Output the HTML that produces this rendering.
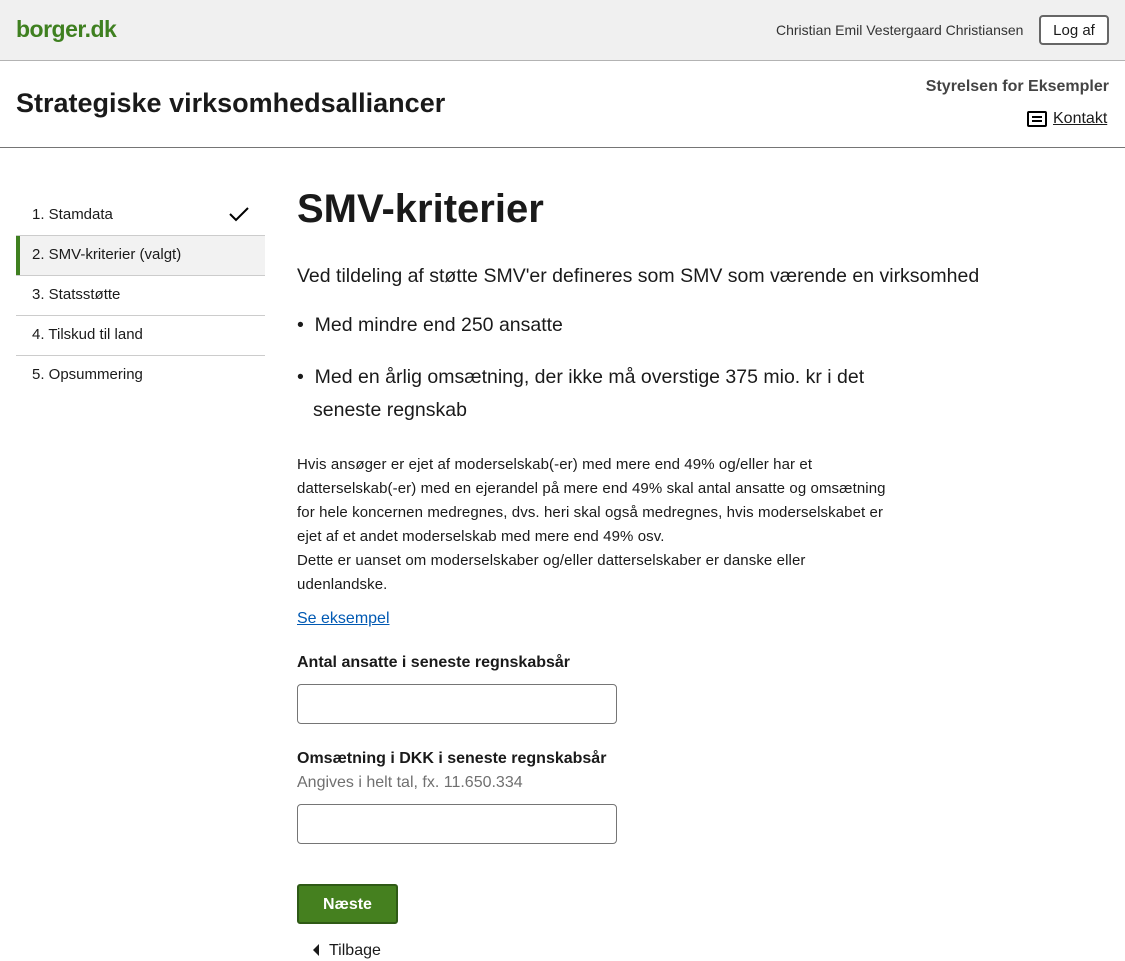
<!DOCTYPE html>
<html><head><meta charset="utf-8"><style>
*{box-sizing:border-box;margin:0;padding:0}
body{width:1125px;height:961px;overflow:hidden;background:#fff;font-family:"Liberation Sans",sans-serif;color:#1a1a1a;position:relative}
.a{position:absolute;white-space:nowrap}
</style></head><body>
<div class="a" style="left:0;top:0;width:1125px;height:61px;background:#f0f0f0;border-bottom:1px solid #b3b3b3"></div>
<div class="a" style="left:16px;top:16px;font-size:23px;font-weight:bold;color:#3f8020;letter-spacing:-0.5px">borger.dk</div>
<div class="a" style="left:776px;top:22px;font-size:14px;color:#333">Christian Emil Vestergaard Christiansen</div>
<div class="a" style="left:1039px;top:15px;width:70px;height:30px;border:2px solid #666;border-radius:4px;background:#fff;font-size:15px;text-align:center;line-height:28px">Log af</div>
<div class="a" style="left:16px;top:88px;font-size:27px;font-weight:bold;color:#1a1a1a">Strategiske virksomhedsalliancer</div>
<div class="a" style="right:16px;top:78px;font-size:16px;font-weight:bold;color:#444">Styrelsen for Eksempler</div>
<div class="a" style="left:1027px;top:111px;width:20px;height:16px;border:2.5px solid #000;border-radius:2px"><div style="position:absolute;left:3px;top:3px;width:10px;height:2px;background:#000"></div><div style="position:absolute;left:3px;top:7px;width:10px;height:2px;background:#000"></div></div>
<div class="a" style="left:1053px;top:110px;font-size:16px;text-decoration:underline;color:#1a1a1a">Kontakt</div>
<div class="a" style="left:0;top:147px;width:1125px;height:1px;background:#757575"></div>

<div class="a" style="left:16px;top:235px;width:249px;height:1px;background:#ccc"></div>
<div class="a" style="left:16px;top:236px;width:249px;height:39px;background:#f2f2f2;border-left:4px solid #3f8020"></div>
<div class="a" style="left:16px;top:275px;width:249px;height:1px;background:#ccc"></div>
<div class="a" style="left:16px;top:315px;width:249px;height:1px;background:#ccc"></div>
<div class="a" style="left:16px;top:355px;width:249px;height:1px;background:#ccc"></div>
<div class="a" style="left:32px;top:206px;font-size:15px">1. Stamdata</div>
<svg class="a" style="left:229px;top:206px" width="20" height="16"><path d="M1 8 L7 14 L19 2" stroke="#000" stroke-width="2" fill="none"/></svg>
<div class="a" style="left:32px;top:246px;font-size:15px">2. SMV-kriterier (valgt)</div>
<div class="a" style="left:32px;top:286px;font-size:15px">3. Statsstøtte</div>
<div class="a" style="left:32px;top:326px;font-size:15px">4. Tilskud til land</div>
<div class="a" style="left:32px;top:366px;font-size:15px">5. Opsummering</div>

<div class="a" style="left:297px;top:187px;font-size:40px;font-weight:bold">SMV-kriterier</div>
<div class="a" style="left:297px;top:265px;font-size:19.5px">Ved tildeling af støtte SMV'er defineres som SMV som værende en virksomhed</div>
<div class="a" style="left:297px;top:314px;font-size:19.5px">•&nbsp; Med mindre end 250 ansatte</div>
<div class="a" style="left:297px;top:361px;font-size:19.5px;line-height:33px">•&nbsp; Med en årlig omsætning, der ikke må overstige 375 mio. kr i det</div>
<div class="a" style="left:313px;top:394px;font-size:19.5px;line-height:33px">seneste regnskab</div>
<div class="a" style="left:297px;top:453px;font-size:15px;line-height:24px;letter-spacing:0.1px">Hvis ansøger er ejet af moderselskab(-er) med mere end 49% og/eller har et<br>datterselskab(-er) med en ejerandel på mere end 49% skal antal ansatte og omsætning<br>for hele koncernen medregnes, dvs. heri skal også medregnes, hvis moderselskabet er<br>ejet af et andet moderselskab med mere end 49% osv.<br>Dette er uanset om moderselskaber og/eller datterselskaber er danske eller<br>udenlandske.</div>
<div class="a" style="left:297px;top:610px;font-size:16px;color:#0059b3;text-decoration:underline">Se eksempel</div>
<div class="a" style="left:297px;top:654px;font-size:16px;font-weight:bold">Antal ansatte i seneste regnskabsår</div>
<div class="a" style="left:297px;top:684px;width:320px;height:40px;border:1px solid #757575;border-radius:4px"></div>
<div class="a" style="left:297px;top:750px;font-size:16px;font-weight:bold">Omsætning i DKK i seneste regnskabsår</div>
<div class="a" style="left:297px;top:774px;font-size:16px;color:#707070">Angives i helt tal, fx. 11.650.334</div>
<div class="a" style="left:297px;top:804px;width:320px;height:40px;border:1px solid #757575;border-radius:4px"></div>
<div class="a" style="left:297px;top:884px;width:101px;height:40px;background:#45801f;border:2px solid #2f5a16;border-radius:3px;color:#fff;font-size:16px;font-weight:bold;text-align:center;line-height:37px">Næste</div>
<svg class="a" style="left:313px;top:944px" width="6" height="12"><path d="M6 0 L0 6 L6 12Z" fill="#1a1a1a"/></svg>
<div class="a" style="left:329px;top:942px;font-size:16px">Tilbage</div>
</body></html>
